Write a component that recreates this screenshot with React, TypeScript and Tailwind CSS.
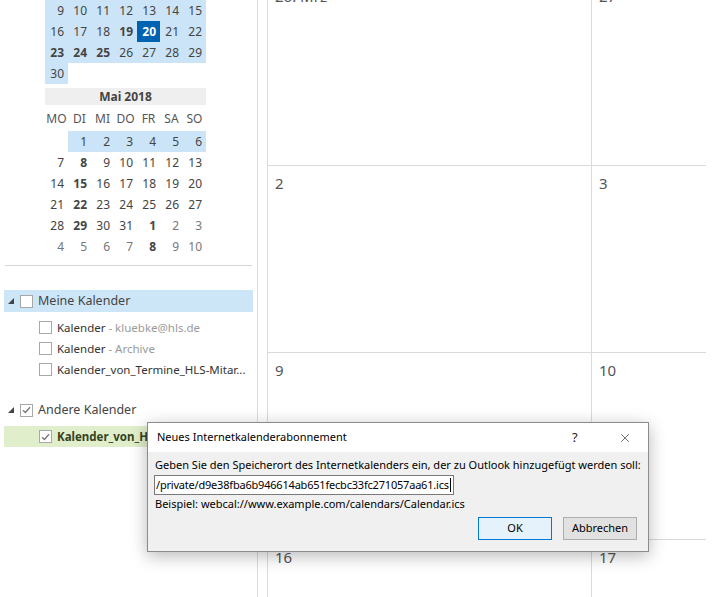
import { X } from "lucide-react";

const font = { fontFamily: '"Segoe UI", "Noto Sans", sans-serif' };

type Day = { n: number; bold?: boolean; muted?: boolean; sel?: boolean; range?: boolean };

const april: (Day | null)[][] = [
  [9, 10, 11, 12, 13, 14, 15].map((n) => ({ n, range: true })),
  [
    { n: 16, range: true },
    { n: 17, range: true },
    { n: 18, range: true },
    { n: 19, range: true, bold: true },
    { n: 20, sel: true, bold: true },
    { n: 21, range: true },
    { n: 22, range: true },
  ],
  [
    { n: 23, range: true, bold: true },
    { n: 24, range: true, bold: true },
    { n: 25, range: true, bold: true },
    { n: 26, range: true },
    { n: 27, range: true },
    { n: 28, range: true },
    { n: 29, range: true },
  ],
  [{ n: 30, range: true }, null, null, null, null, null, null],
];

const may: (Day | null)[][] = [
  [null, ...[1, 2, 3, 4, 5, 6].map((n) => ({ n, range: true }))],
  [{ n: 7 }, { n: 8, bold: true }, { n: 9 }, { n: 10 }, { n: 11 }, { n: 12 }, { n: 13 }],
  [{ n: 14 }, { n: 15, bold: true }, { n: 16 }, { n: 17 }, { n: 18 }, { n: 19 }, { n: 20 }],
  [{ n: 21 }, { n: 22, bold: true }, { n: 23 }, { n: 24 }, { n: 25 }, { n: 26 }, { n: 27 }],
  [
    { n: 28 },
    { n: 29, bold: true },
    { n: 30 },
    { n: 31 },
    { n: 1, bold: true },
    { n: 2, muted: true },
    { n: 3, muted: true },
  ],
  [
    { n: 4, muted: true },
    { n: 5, muted: true },
    { n: 6, muted: true },
    { n: 7, muted: true },
    { n: 8, bold: true },
    { n: 9, muted: true },
    { n: 10, muted: true },
  ],
];

function MonthRows({ rows }: { rows: (Day | null)[][] }) {
  return (
    <div className="flex flex-col">
      {rows.map((row, i) => (
        <div key={i} className="flex h-[21px]">
          {row.map((d, j) => {
            if (!d) return <div key={j} className="w-[23px]" />;
            let cls = "text-[#444]";
            if (d.muted) cls = "text-[#777]";
            if (d.sel) cls = "bg-[#0063b1] text-white";
            else if (d.range) cls += " bg-[#cce4f7]";
            return (
              <div
                key={j}
                className={`w-[23px] flex items-center justify-end pr-[4px] text-[12px] ${cls} ${
                  d.bold ? "font-bold" : ""
                }`}
              >
                {d.n}
              </div>
            );
          })}
        </div>
      ))}
    </div>
  );
}

function Tri() {
  return (
    <svg width="6" height="6" viewBox="0 0 6 6" className="shrink-0">
      <polygon points="6,0 6,6 0,6" fill="#444" />
    </svg>
  );
}

function Check({ checked }: { checked?: boolean }) {
  return (
    <div className="w-[13px] h-[13px] border border-[#a8a8a8] bg-white flex items-center justify-center shrink-0">
      {checked && (
        <svg width="9" height="8" viewBox="0 0 9 8">
          <path d="M1 4.2 L3.4 6.5 L8 1.2" fill="none" stroke="#777" strokeWidth="1.3" />
        </svg>
      )}
    </div>
  );
}

function Sidebar() {
  return (
    <aside className="w-[258px] shrink-0 border-r border-[#dcdcdc] bg-white flex flex-col">
      <div className="pl-[45px]">
        <MonthRows rows={april} />
        <div className="mt-[4px] w-[161px] h-[17px] bg-[#efefef] flex items-center justify-center text-[12px] font-bold text-[#444]">
          Mai 2018
        </div>
        <div className="flex h-[21px] mt-[3px]">
          {["MO", "DI", "MI", "DO", "FR", "SA", "SO"].map((w) => (
            <div key={w} className="w-[23px] flex items-center justify-center text-[12px] text-[#555]">
              {w}
            </div>
          ))}
        </div>
        <div className="mt-[2px]">
          <MonthRows rows={may} />
        </div>
      </div>
      <div className="mx-[5px] mt-[8px] border-t border-[#d6d6d6]" />

      <div className="mt-[24px] flex flex-col">
        <div className="mx-[4px] h-[22px] bg-[#cde6f7] flex items-center pl-[4px] gap-[6px]">
          <Tri />
          <Check />
          <span className="ml-[-1px] text-[12.5px] text-[#444]">Meine Kalender</span>
        </div>
        <div className="mt-[5px] flex flex-col">
          {[
            ["Kalender", " - kluebke@hls.de"],
            ["Kalender", " - Archive"],
            ["Kalender_von_Termine_HLS-Mitar...", ""],
          ].map(([a, b], i) => (
            <div key={i} className="h-[21px] flex items-center pl-[39px] gap-[5px] text-[11.5px]">
              <Check />
              <span className="text-[#333]">
                {a}
                {b && <span className="text-[#9a9a9a]">{b}</span>}
              </span>
            </div>
          ))}
        </div>
        <div className="mt-[19px] mx-[4px] h-[22px] flex items-center pl-[4px] gap-[6px]">
          <Tri />
          <Check checked />
          <span className="ml-[-1px] text-[12.5px] text-[#444]">Andere Kalender</span>
        </div>
        <div className="mt-[5px] mx-[4px] h-[21px] bg-[#e0eecb] flex items-center pl-[35px] gap-[5px] text-[11.5px]">
          <Check checked />
          <span className="font-bold text-[#34421f] whitespace-nowrap">Kalender_von_HLS-Mitarbeiter</span>
        </div>
      </div>
    </aside>
  );
}

const weeks = [
  ["26. Mrz", "27"],
  ["2", "3"],
  ["9", "10"],
  ["16", "17"],
];

function MonthGrid() {
  return (
    <main className="flex-1 pl-[9px] overflow-hidden">
      <div className="-mt-[21px] flex flex-col">
        {weeks.map((w, i) => (
          <div key={i} className="flex h-[187px]">
            <div className="w-[324px] border-l border-b border-[#dadada] pl-[7px] pt-[6px] text-[15px] text-[#555]">
              {w[0]}
            </div>
            <div className="w-[115px] border-l border-b border-[#dadada] pl-[7px] pt-[6px] text-[15px] text-[#555]">
              {w[1]}
            </div>
          </div>
        ))}
      </div>
    </main>
  );
}

function Dialog() {
  return (
    <div className="absolute left-[147px] top-[422px] w-[502px] h-[130px] border border-[#8c8c8c] bg-[#f0f0f0] shadow-[0_4px_16px_rgba(0,0,0,0.28)] flex flex-col text-[11px] text-black">
      <div className="h-[29px] bg-white flex items-center pl-[9px]">
        <span className="flex-1">Neues Internetkalenderabonnement</span>
        <span className="w-[10px] text-[13px] text-[#222] mr-[36px]">?</span>
        <X size={14} strokeWidth={1.1} className="text-[#222] mr-[16px]" />
      </div>
      <div className="flex flex-col px-[6px]">
        <div className="mt-[5px] pl-[1px] leading-[16px] whitespace-nowrap">
          Geben Sie den Speicherort des Internetkalenders ein, der zu Outlook hinzugefügt werden soll:
        </div>
        <div className="mt-[2px] w-[300px] h-[20px] border border-[#7a7a7a] bg-white flex items-center pl-[1px] overflow-hidden">
          <span className="whitespace-nowrap tracking-[-0.2px]">/private/d9e38fba6b946614ab651fecbc33fc271057aa61.ics</span>
          <span className="w-px h-[14px] bg-black ml-[1px]" />
        </div>
        <div className="mt-[1px] pl-[1px] leading-[16px]">
          Beispiel: webcal://www.example.com/calendars/Calendar.ics
        </div>
        <div className="mt-[5px] flex justify-end gap-[11px] pr-[5px]">
          <button className="w-[74px] h-[23px] border border-[#0078d7] bg-[#e5f1fb] text-[11px]">OK</button>
          <button className="w-[74px] h-[23px] border border-[#adadad] bg-[#e1e1e1] text-[11px]">
            Abbrechen
          </button>
        </div>
      </div>
    </div>
  );
}

export default function App() {
  return (
    <div className="relative w-[723px] h-[597px] overflow-hidden bg-white flex" style={font}>
      <Sidebar />
      <MonthGrid />
      <Dialog />
    </div>
  );
}
